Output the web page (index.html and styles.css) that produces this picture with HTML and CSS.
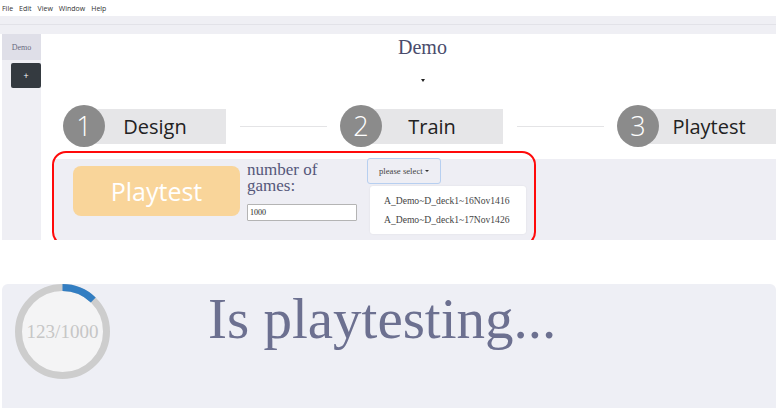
FILE: index.html
```html
<!DOCTYPE html>
<html lang="en">
<head>
<meta charset="utf-8">
<title>Demo</title>
<link rel="stylesheet" href="styles.css">
</head>
<body>
<nav class="menubar">
  <span>File</span><span>Edit</span><span>View</span><span>Window</span><span>Help</span>
</nav>
<div class="toolbar"><div class="tb-row top"></div><div class="tb-row"></div></div>
<div class="app">
  <aside class="sidebar">
    <div class="tab">Demo</div>
    <button class="add">+</button>
  </aside>
  <main class="main">
    <h1 class="title">Demo</h1>
    <div class="caret-wrap"><span class="caret"></span></div>
    <div class="steps">
      <div class="step"><span class="num">1</span><span class="label">Design</span></div>
      <span class="connector"></span>
      <div class="step"><span class="num">2</span><span class="label">Train</span></div>
      <span class="connector"></span>
      <div class="step"><span class="num">3</span><span class="label">Playtest</span></div>
    </div>
    <section class="panel">
      <button class="playtest">Playtest</button>
      <div class="games">
        <label class="games-label" for="games">number of games:</label>
        <input id="games" class="games-input" value="1000">
      </div>
      <div class="select">
        <button class="select-btn">please select <span class="mini-caret"></span></button>
        <ul class="menu">
          <li>A_Demo~D_deck1~16Nov1416</li>
          <li>A_Demo~D_deck1~17Nov1426</li>
        </ul>
      </div>
      <div class="highlight"></div>
    </section>
  </main>
</div>
<section class="progress-panel">
  <svg class="ring" width="95" height="95" viewBox="0 0 95 95">
    <circle cx="47.5" cy="47.5" r="44" fill="#f4f4f5" stroke="#cdcdcd" stroke-width="7"/>
    <circle cx="47.5" cy="47.5" r="44" fill="none" stroke="#337ec2" stroke-width="7" stroke-dasharray="34 300" transform="rotate(-90 47.5 47.5)"/>
    <text x="47.5" y="54" text-anchor="middle" class="ring-text">123/1000</text>
  </svg>
  <div class="status">Is playtesting...</div>
</section>
</body>
</html>
```
FILE: styles.css
```css
* { box-sizing: border-box; }
html, body { margin: 0; padding: 0; }
body {
  width: 776px;
  height: 408px;
  overflow: hidden;
  background: #ffffff;
  font-family: "Liberation Serif", "Times New Roman", serif;
}

.menubar {
  height: 16px;
  display: flex;
  align-items: center;
  gap: 6px;
  padding-left: 2px;
  font-family: "Open Sans", "Noto Sans", sans-serif;
  font-size: 7px;
  color: #333;
}

.toolbar { height: 18px; background: #efeff4; }
.tb-row { height: 9px; }
.tb-row.top { border-bottom: 1px solid #e2e2e8; }

.app { display: flex; height: 206px; }

.sidebar {
  width: 39px;
  margin-left: 2px;
  background: #efeff4;
  display: flex;
  flex-direction: column;
  align-items: flex-start;
}
.tab {
  width: 39px;
  height: 26px;
  background: #dfdfe8;
  font-size: 8px;
  color: #6a6a80;
  display: flex;
  align-items: center;
  justify-content: center;
}
.add {
  margin: 3px 0 0 9px;
  width: 30px;
  height: 25px;
  border: none;
  border-radius: 2px;
  background: #343a40;
  color: #fff;
  font-family: "Open Sans", sans-serif;
  font-size: 9px;
  padding: 0;
}

.main { flex: 1; padding-left: 13px; overflow: hidden; }

.title {
  margin: 2px 0 0 0;
  padding-left: 15px;
  height: 22px;
  font-size: 20px;
  line-height: 22px;
  font-weight: normal;
  text-align: center;
  color: #4a4c6c;
}
.caret-wrap {
  padding-top: 21px;
  padding-left: 15px;
  height: 24px;
  display: flex;
  justify-content: center;
}
.caret {
  width: 0; height: 0;
  border-left: 2.5px solid transparent;
  border-right: 2.5px solid transparent;
  border-top: 3px solid #222;
}

.steps {
  margin-top: 23px;
  height: 42px;
  padding-left: 9px;
  display: flex;
  align-items: center;
  white-space: nowrap;
}
.step { display: flex; align-items: center; flex: none; }
.num {
  position: relative;
  z-index: 1;
  width: 42px;
  height: 42px;
  border-radius: 50%;
  background: #8b8b8b;
  color: #fff;
  font-family: "Open Sans", sans-serif;
  font-weight: 300;
  font-size: 27px;
  line-height: 42px;
  text-align: center;
}
.label {
  margin-left: -21px;
  width: 142px;
  height: 35px;
  background: #e6e6e8;
  font-family: "Open Sans", sans-serif;
  font-size: 20px;
  line-height: 35px;
  color: #222;
  text-align: center;
}
.connector {
  flex: none;
  width: 87px;
  height: 1px;
  margin: 0 13px 0 14px;
  background: #e4e4e6;
}

.panel {
  position: relative;
  margin-top: 12px;
  height: 81px;
  background: #eeeef4;
  display: flex;
  align-items: flex-start;
}
.playtest {
  margin: 7px 0 0 19px;
  width: 167px;
  height: 50px;
  border: none;
  border-radius: 8px;
  background: #f9d59a;
  color: #fff;
  font-family: "Open Sans", sans-serif;
  font-size: 25px;
  padding: 0;
}
.games {
  margin: 3px 0 0 7px;
  width: 110px;
  display: flex;
  flex-direction: column;
}
.games-label {
  font-size: 17px;
  line-height: 16px;
  color: #55577a;
}
.games-input {
  margin-top: 10px;
  width: 110px;
  height: 17px;
  border: 1px solid #b4b4b4;
  border-radius: 1px;
  background: #fff;
  font-family: "Liberation Serif", serif;
  font-size: 8px;
  padding: 0 2px;
  color: #222;
}
.select {
  margin: -1px 0 0 10px;
  display: flex;
  flex-direction: column;
  align-items: flex-start;
}
.select-btn {
  width: 74px;
  height: 26px;
  border: 1px solid #b7cff0;
  border-radius: 3px;
  background: transparent;
  font-family: "Liberation Serif", serif;
  font-size: 8.7px;
  color: #444;
  padding: 0 0 0 11px;
  text-align: left;
  display: flex;
  align-items: center;
  gap: 2px;
}
.mini-caret {
  display: inline-block;
  width: 0; height: 0;
  border-left: 2px solid transparent;
  border-right: 2px solid transparent;
  border-top: 2.5px solid #333;
}
.menu {
  list-style: none;
  margin: 2px 0 0 3px;
  padding: 5px 0 0 14px;
  width: 156px;
  height: 48px;
  background: #fff;
  border-radius: 3px;
  box-shadow: 0 0 2px rgba(0,0,0,0.08);
  font-size: 9.6px;
  line-height: 19px;
  color: #444;
}
.highlight {
  position: absolute;
  left: -2px;
  top: -8px;
  width: 484px;
  height: 95px;
  border: 2.5px solid #ff0a0a;
  border-radius: 14px;
  pointer-events: none;
}

.progress-panel {
  margin: 44px 0 0 2px;
  height: 124px;
  background: #eeeff5;
  border-radius: 6px 6px 0 0;
  display: flex;
  align-items: flex-start;
}
.ring { margin-left: 13px; flex: none; }
.ring-text {
  font-family: "Liberation Serif", serif;
  font-size: 19px;
  fill: #c6c6c6;
}
.status {
  margin: 3px 0 0 98px;
  font-size: 57px;
  line-height: 64px;
  color: #6c7090;
  white-space: nowrap;
}
```
